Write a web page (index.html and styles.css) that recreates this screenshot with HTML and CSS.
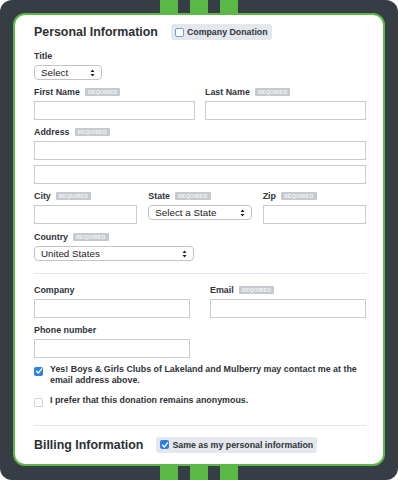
FILE: index.html
```html
<!DOCTYPE html>
<html>
  <head>
    <meta charset="utf-8" />
    <title>Donation Form</title>
    <link rel="stylesheet" href="styles.css">
  </head>

  <body>
    <div class="frame">
      <form class="card">
        <div class="section-head">
          <h2>Personal Information</h2>
          <label class="pill"><span class="check check--focus"></span>Company Donation</label>
        </div>

        <div class="field">
          <label class="label">Title</label>
          <div class="select select--title"><span>Select</span><svg width="5" height="8" viewBox="0 0 5 8"><path d="M0.5 3 L2.5 0.5 L4.5 3 Z M0.5 5 L2.5 7.5 L4.5 5 Z" fill="#222"/></svg></div>
        </div>

        <div class="row row--two">
          <div class="field">
            <label class="label">First Name <span class="req">Required</span></label>
            <input type="text" class="input" />
          </div>
          <div class="field">
            <label class="label">Last Name <span class="req">Required</span></label>
            <input type="text" class="input" />
          </div>
        </div>

        <div class="field">
          <label class="label">Address <span class="req">Required</span></label>
          <input type="text" class="input" />
          <input type="text" class="input input--next" />
        </div>

        <div class="row row--three">
          <div class="field">
            <label class="label">City <span class="req">Required</span></label>
            <input type="text" class="input" />
          </div>
          <div class="field">
            <label class="label">State <span class="req">Required</span></label>
            <div class="select"><span>Select a State</span><svg width="5" height="8" viewBox="0 0 5 8"><path d="M0.5 3 L2.5 0.5 L4.5 3 Z M0.5 5 L2.5 7.5 L4.5 5 Z" fill="#222"/></svg></div>
          </div>
          <div class="field">
            <label class="label">Zip <span class="req">Required</span></label>
            <input type="text" class="input" />
          </div>
        </div>

        <div class="field">
          <label class="label">Country <span class="req">Required</span></label>
          <div class="select select--country"><span>United States</span><svg width="5" height="8" viewBox="0 0 5 8"><path d="M0.5 3 L2.5 0.5 L4.5 3 Z M0.5 5 L2.5 7.5 L4.5 5 Z" fill="#222"/></svg></div>
        </div>

        <hr class="divider" />

        <div class="row row--wide">
          <div class="field">
            <label class="label">Company</label>
            <input type="text" class="input" />
          </div>
          <div class="field">
            <label class="label">Email <span class="req">Required</span></label>
            <input type="text" class="input" />
          </div>
        </div>

        <div class="row row--wide">
          <div class="field">
            <label class="label">Phone number</label>
            <input type="text" class="input" />
          </div>
        </div>

        <label class="option">
          <span class="check check--on"><svg width="8" height="8" viewBox="0 0 8 8"><path d="M1.5 4.2 L3.3 6 L6.6 1.8" fill="none" stroke="#fff" stroke-width="1.3" stroke-linecap="round" stroke-linejoin="round"/></svg></span>
          <span>Yes! Boys &amp; Girls Clubs of Lakeland and Mulberry may contact me at the email address above.</span>
        </label>

        <label class="option">
          <span class="check"></span>
          <span>I prefer that this donation remains anonymous.</span>
        </label>

        <hr class="divider divider--bottom" />

        <div class="section-head section-head--billing">
          <h2>Billing Information</h2>
          <label class="pill"><span class="check check--on"><svg width="8" height="8" viewBox="0 0 8 8"><path d="M1.5 4.2 L3.3 6 L6.6 1.8" fill="none" stroke="#fff" stroke-width="1.3" stroke-linecap="round" stroke-linejoin="round"/></svg></span>Same as my personal information</label>
        </div>
      </form>
    </div>
  </body>
</html>
```

FILE: styles.css
```css
:root {
  font-family: 'Liberation Sans', Arial, sans-serif;
  color: #2f3338;
}

body {
  margin: 0;
  background: #fff;
}

.frame {
  box-sizing: border-box;
  width: 398px;
  height: 480px;
  padding: 13px 13px 14px;
  border-radius: 12px;
  /* the three green stripes behind the card */
  background:
    linear-gradient(to right,
      transparent 160px, #5ab946 160px, #5ab946 178px,
      transparent 178px, transparent 190px, #5ab946 190px, #5ab946 208px,
      transparent 208px, transparent 220px, #5ab946 220px, #5ab946 238px,
      transparent 238px),
    #373d44;
}

.card {
  box-sizing: border-box;
  height: 100%;
  padding: 9px 17px 0 19px;
  background: #fff;
  border: 2px solid #5ab946;
  border-radius: 12px;
}

.section-head {
  display: flex;
  align-items: center;
  height: 16px;
  margin-bottom: 10px;
}

.section-head h2 {
  margin: 0 13px 0 0;
  font-size: 12.4px;
  font-weight: bold;
  color: #2b2f33;
}

.pill {
  display: flex;
  align-items: center;
  height: 16px;
  padding: 0 4px;
  border-radius: 3px;
  background: #e4e8ec;
  font-size: 8.8px;
  font-weight: bold;
}

.check {
  box-sizing: border-box;
  display: inline-flex;
  align-items: center;
  justify-content: center;
  flex: none;
  width: 9px;
  height: 9px;
  margin-right: 3px;
  border: 1px solid #cfd2d5;
  border-radius: 2px;
  background: #fff;
}

.check--focus {
  border: 1.5px solid #6f9fd8;
}

.check--on {
  border: none;
  background: #2f80e4;
}

.field {
  margin-bottom: 6px;
}

.label {
  display: flex;
  align-items: center;
  height: 12px;
  margin-bottom: 3px;
  font-size: 8.9px;
  font-weight: bold;
}

.req {
  display: inline-block;
  margin-left: 5px;
  padding: 0 3px;
  height: 8px;
  line-height: 8.5px;
  border-radius: 1px;
  background: #c5cacf;
  color: #f4f5f6;
  font-size: 5.3px;
  font-weight: bold;
  text-transform: uppercase;
  letter-spacing: 0.2px;
}

.input {
  box-sizing: border-box;
  display: block;
  width: 100%;
  height: 19px;
  margin: 0;
  padding: 0 4px;
  border: 1px solid #c9cbcd;
  border-radius: 0;
  background: #fff;
}

.input--next {
  margin-top: 5px;
}

.select {
  box-sizing: border-box;
  display: flex;
  align-items: center;
  justify-content: space-between;
  height: 15px;
  padding: 0 6px 0 6px;
  border: 1px solid #c2c4c6;
  border-radius: 4px;
  background: #fff;
  font-size: 9.8px;
  color: #222;
}

.select--title {
  width: 68px;
}

.select--country {
  width: 160px;
}

.row {
  display: grid;
}

.row--two {
  grid-template-columns: 1fr 1fr;
  column-gap: 10px;
}

.row--three {
  grid-template-columns: 1fr 1fr 1fr;
  column-gap: 11px;
}

.row--three .select {
  margin-bottom: 5px;
}

.row--wide {
  grid-template-columns: 1fr 1fr;
  column-gap: 20px;
}

.divider {
  margin: 12px 0 10px;
  border: none;
  border-top: 1px solid #e6e8ea;
}

.divider--bottom {
  margin: 18px 0 11px;
}

.option {
  display: flex;
  align-items: flex-start;
  font-size: 8.9px;
  font-weight: bold;
  line-height: 11px;
}

.option .check {
  margin: 2.5px 7px 0 0;
}

.option + .option {
  margin-top: 9px;
}
```
